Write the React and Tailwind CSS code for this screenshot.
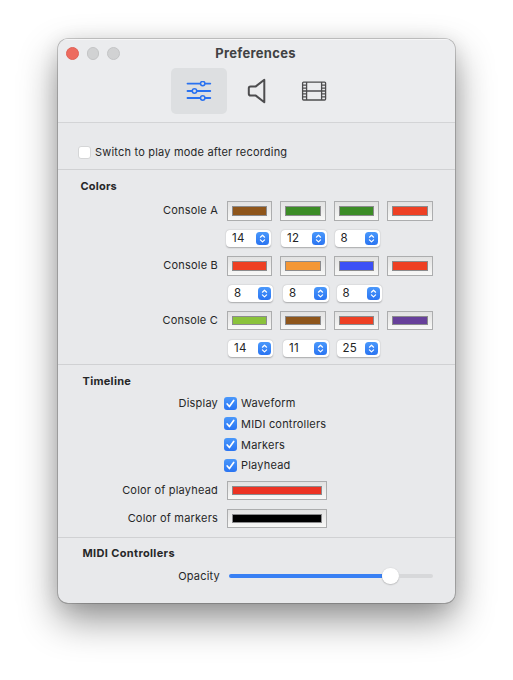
import React from "react";

function Well({ color, size = "w-[45px] h-5" }) {
  return (
    <div className={`${size} shrink-0 border border-[#acadae] bg-gradient-to-b from-[#e2e2e2] to-[#f8f8f7] p-1`}>
      <div className={`h-full w-full border border-[#8b8b8d] ${color}`} />
    </div>
  );
}

function Popup({ value, size }) {
  return (
    <div className={`${size} flex h-[17px] shrink-0 items-center justify-between rounded-[4px] bg-white pr-[2px] pl-[6px] shadow-[0_0.5px_1.5px_rgba(0,0,0,0.28)]`}>
      <span className="text-[11.5px] leading-[17px] text-[#222324]">{value}</span>
      <span className="flex h-[13px] w-[13px] items-center justify-center rounded-[3.5px] bg-gradient-to-b from-[#4a98fb] to-[#2a74f2]">
        <svg width="13" height="13" viewBox="0 0 13 13" fill="none" stroke="#fff" strokeWidth="1.2" strokeLinecap="round" strokeLinejoin="round">
          <path d="M4.4 5.2 6.5 3.2 8.6 5.2M4.4 7.9 6.5 9.9 8.6 7.9" />
        </svg>
      </span>
    </div>
  );
}

function Label({ children, size = "w-[160px]" }) {
  return <div className={`${size} shrink-0 text-right whitespace-nowrap`}>{children}</div>;
}

function ConsoleRow({ name, colors, height, margin }) {
  return (
    <div className={`flex ${margin} ${height}`}>
      <div className="pt-px"><Label>{name}</Label></div>
      <div className="ml-[9px] flex gap-2">
        {colors.map((c, i) => (
          <Well key={i} color={c} size={`${i % 2 ? "w-[46px]" : "w-[45px]"} ${height}`} />
        ))}
      </div>
    </div>
  );
}

function Check({ children }) {
  return (
    <div className="flex h-[20.67px] items-center">
      <span className="flex h-[13px] w-[13px] shrink-0 rounded-[3px] bg-gradient-to-b from-[#4a98fb] to-[#2a74f2]">
        <svg width="13" height="13" viewBox="0 0 13 13" fill="none" stroke="#fff" strokeWidth="1.7" strokeLinecap="round" strokeLinejoin="round">
          <path d="M3.2 7 5.4 9.5 9.7 3.4" />
        </svg>
      </span>
      <span className="ml-1 whitespace-nowrap">{children}</span>
    </div>
  );
}

function Toolbar() {
  return (
    <div className="flex pl-[112.5px]">
      <div className="flex h-[46px] w-[56.5px] items-center justify-center rounded-[5px] bg-[#dddfe1]">
        <svg width="26" height="20" viewBox="186 81 26 20" fill="none" stroke="#2a72f0" strokeWidth="1.8" strokeLinecap="round">
          <path d="M187.5 83.6H200.2M205.2 83.6H210.3M187.5 91H192M197 91H210.3M187.5 98H200.2M205.2 98H210.3" />
          <circle cx="202.7" cy="83.6" r="2.2" strokeWidth="1.5" />
          <circle cx="194.5" cy="91" r="2.2" strokeWidth="1.5" />
          <circle cx="202.7" cy="98" r="2.2" strokeWidth="1.5" />
        </svg>
      </div>
      <div className="flex h-[46px] w-[60px] items-center justify-center">
        <svg width="20" height="26" viewBox="247 78 20 26" fill="none" stroke="#4d4d4f" strokeWidth="2" strokeLinejoin="round">
          <path d="M264.3 79.8V102.2L255.8 95.6H250.6Q248.8 95.6 248.8 93.8V88.2Q248.8 86.4 250.6 86.4H255.8Z" />
        </svg>
      </div>
      <div className="flex h-[46px] w-[54px] items-center justify-center">
        <svg width="26" height="20" viewBox="301 81 26 20" fill="none" stroke="#4d4d4f" strokeWidth="1.3">
          <rect x="302.6" y="82.1" width="23" height="17.9" rx="1" />
          <path d="M306.6 82V100M321.6 82V100" />
          <path d="M306.6 91H321.6" strokeWidth="1.6" />
          <path d="M302.6 85.2H306.6M302.6 88.1H306.6M302.6 91H306.6M302.6 93.9H306.6M302.6 96.8H306.6M321.6 85.2H325.6M321.6 88.1H325.6M321.6 91H325.6M321.6 93.9H325.6M321.6 96.8H325.6" />
        </svg>
      </div>
    </div>
  );
}

export default function App() {
  return (
    <div className="h-[680px] w-[513px] overflow-hidden bg-white pt-[39px] pl-[58px] font-['Inter','Liberation_Sans',sans-serif] text-[11px] leading-4 tracking-[0.2px] text-[#262728]">
      <div className="h-[564px] w-[397px] overflow-hidden rounded-[10px] bg-[#e8e9eb] shadow-[0_0_0_0.8px_rgba(0,0,0,0.24),0_17px_38px_rgba(0,0,0,0.42),0_3px_20px_rgba(0,0,0,0.1)]">
        <header className="h-[84px] border-b border-[#d3d4d6] bg-[#ebecee] shadow-[inset_0_1px_0_#f6f6f7]">
          <div className="flex h-[29px] items-center">
            <div className="flex w-[131.5px] gap-2 pl-2">
              <span className="h-[12.5px] w-[12.5px] rounded-full border border-[#df6257] bg-[#ed6b5f]" />
              <span className="h-[12.5px] w-[12.5px] rounded-full border border-[#c3c4c5] bg-[#d1d2d3]" />
              <span className="h-[12.5px] w-[12.5px] rounded-full border border-[#c3c4c5] bg-[#d1d2d3]" />
            </div>
            <div className="w-[132px] pb-0.5 text-center text-[13px] font-bold tracking-[0.3px] text-[#414244]">Preferences</div>
          </div>
          <Toolbar />
        </header>

        <section className="flex h-[47px] items-center border-b border-[#d0d1d3] pt-3 pl-5">
          <span className="h-[13px] w-[13px] rounded-[3px] border border-[#d5d6d7] bg-white" />
          <span className="ml-1">Switch to play mode after recording</span>
        </section>

        <section className="h-[195px] border-b border-[#d0d1d3] pt-2">
          <h2 className="pl-[22.5px] font-bold">Colors</h2>
          <ConsoleRow name="Console A" margin="mt-[7px]" height="h-5" colors={["bg-[#8f561b]", "bg-[#3c8c26]", "bg-[#3c8c26]", "bg-[#ee4023]"]} />
          <div className="mt-[9px] flex pl-[168px]">
            <Popup value="14" size="w-[45px]" />
            <Popup value="12" size="ml-[10px] w-[45.5px]" />
            <Popup value="8" size="ml-2 w-[45.5px]" />
          </div>
          <ConsoleRow name="Console B" margin="mt-[9px]" height="h-5" colors={["bg-[#ee4023]", "bg-[#f49735]", "bg-[#3c50f6]", "bg-[#ee4023]"]} />
          <div className="mt-[9px] flex pl-[170px]">
            <Popup value="8" size="w-[45px]" />
            <Popup value="8" size="ml-[10px] w-[45.5px]" />
            <Popup value="8" size="ml-2 w-[45.5px]" />
          </div>
          <ConsoleRow name="Console C" margin="mt-[9px]" height="h-[19px]" colors={["bg-[#8ac23b]", "bg-[#8f561b]", "bg-[#ee4023]", "bg-[#67409a]"]} />
          <div className="mt-[9.5px] flex pl-[170px]">
            <Popup value="14" size="w-[45px]" />
            <Popup value="11" size="ml-[10px] w-[45.5px]" />
            <Popup value="25" size="ml-2 w-[43.5px]" />
          </div>
        </section>

        <section className="h-[173px] border-b border-[#d0d1d3] pt-2">
          <h2 className="pl-[24.5px] font-bold tracking-[0.3px]">Timeline</h2>
          <div className="mt-1 flex">
            <div className="pt-[1.5px]"><Label>Display</Label></div>
            <div className="ml-[6px]">
              <Check>Waveform</Check>
              <Check>MIDI controllers</Check>
              <Check>Markers</Check>
              <Check>Playhead</Check>
            </div>
          </div>
          <div className="mt-[5.3px] flex items-center">
            <Label>Color of playhead</Label>
            <div className="ml-[9px]"><Well color="bg-[#ec3323]" size="h-[19px] w-[99.5px]" /></div>
          </div>
          <div className="mt-[9px] flex items-center">
            <Label>Color of markers</Label>
            <div className="ml-[9px]"><Well color="bg-black" size="h-[19px] w-[99.5px]" /></div>
          </div>
        </section>

        <section className="pt-[7px]">
          <h2 className="pl-[24.5px] font-bold tracking-[0.35px]">MIDI Controllers</h2>
          <div className="mt-[7px] flex items-center">
            <Label size="w-[162px]">Opacity</Label>
            <div className="ml-[9px] flex h-4 w-[204px] items-center">
              <span className="h-1 w-[153px] rounded-l-full bg-[#3880f4]" />
              <span className="h-4 w-[17px] rounded-full bg-white shadow-[0_0.5px_1.5px_rgba(0,0,0,0.3)]" />
              <span className="h-[3.5px] flex-1 rounded-r-full bg-[#d7d8da]" />
            </div>
          </div>
        </section>
      </div>
    </div>
  );
}
